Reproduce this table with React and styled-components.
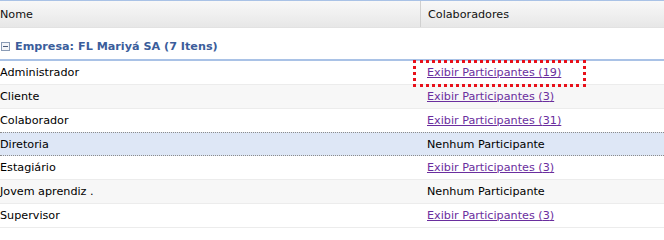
import React from 'react';
import styled, { createGlobalStyle } from 'styled-components';

const GlobalStyle = createGlobalStyle`
  html, body {
    margin: 0;
    padding: 0;
    background: #ffffff;
  }
  body {
    font-family: 'DejaVu Sans', 'Liberation Sans', sans-serif;
  }
`;

const Grid = styled.div`
  width: 664px;
  border-top: 1px solid #a9c2e6;
  font-size: 11.2px;
  color: #000;
`;

const Header = styled.div`
  display: grid;
  grid-template-columns: 420px 1fr;
  height: 26px;
  background: linear-gradient(#f8f8f8, #e7e7e7);
  border-bottom: 1px solid #e2e2e2;
`;

const HeadCell = styled.div`
  display: flex;
  align-items: center;
  padding-left: ${(p) => (p.$first ? '0' : '7px')};
  border-left: ${(p) => (p.$first ? 'none' : '1px solid #d0d0d0')};
  color: #111;
`;

const GroupRow = styled.div`
  display: flex;
  align-items: center;
  gap: 5px;
  height: 33px;
  padding: 6px 0 0 1px;
  box-sizing: border-box;
  border-bottom: 2px solid #a9c2e6;
  color: #3b5d9b;
  font-weight: bold;
`;

const Toggle = styled.span`
  width: 7px;
  height: 7px;
  border: 1px solid #8a9bb5;
  background: #f2f4f8;
  position: relative;
  &::after {
    content: '';
    position: absolute;
    left: 1px;
    right: 1px;
    top: 3px;
    height: 1px;
    background: #4a5a78;
  }
`;

const Row = styled.div`
  display: grid;
  grid-template-columns: 420px 1fr;
  height: 24px;
  box-sizing: border-box;
  background: ${(p) => (p.$selected ? '#dee7f6' : p.$alt ? '#f7f7f7' : '#fff')};
  border-bottom: ${(p) => (p.$selected ? '1px dotted #8c8c8c' : '1px solid #ececec')};
  border-top: ${(p) => (p.$selected ? '1px dotted #8c8c8c' : 'none')};
  margin-top: ${(p) => (p.$selected ? '-1px' : '0')};
`;

const Cell = styled.div`
  display: flex;
  align-items: center;
  padding-left: ${(p) => (p.$first ? '0' : '7px')};
  position: relative;
`;

const Link = styled.a`
  color: #6a2e9e;
  text-decoration: underline;
  cursor: pointer;
`;

const Focus = styled.span`
  position: absolute;
  left: -7px;
  top: -1px;
  width: 173px;
  height: 27px;
  border: 3px dotted #e8101a;
  box-sizing: border-box;
  pointer-events: none;
`;

const rows = [
  { name: 'Administrador', count: 19, focus: true },
  { name: 'Cliente', count: 3 },
  { name: 'Colaborador', count: 31 },
  { name: 'Diretoria', count: 0, selected: true },
  { name: 'Estagiário', count: 3 },
  { name: 'Jovem aprendiz .', count: 0 },
  { name: 'Supervisor', count: 3 },
];

export default function App() {
  return (
    <>
      <GlobalStyle />
      <Grid>
        <Header>
          <HeadCell $first>Nome</HeadCell>
          <HeadCell>Colaboradores</HeadCell>
        </Header>
        <GroupRow>
          <Toggle />
          Empresa: FL Mariyá SA (7 Itens)
        </GroupRow>
        {rows.map((r, i) => (
          <Row key={r.name} $alt={i % 2 === 1} $selected={r.selected}>
            <Cell $first>{r.name}</Cell>
            <Cell>
              {r.focus && <Focus />}
              {r.count > 0 ? (
                <Link>Exibir Participantes ({r.count})</Link>
              ) : (
                'Nenhum Participante'
              )}
            </Cell>
          </Row>
        ))}
      </Grid>
    </>
  );
}
